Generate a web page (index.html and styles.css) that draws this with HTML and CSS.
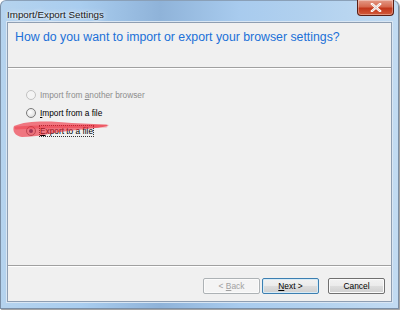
FILE: index.html
```html
<!DOCTYPE html>
<html>
<head>
<meta charset="utf-8">
<link rel="stylesheet" href="styles.css">
</head>
<body>
<div class="window">
  <div class="titlebar">
    <span class="title">Import/Export Settings</span>
    <div class="close">
      <svg width="12" height="9" viewBox="0 0 12 9"><path d="M2 1 L10 8 M10 1 L2 8" stroke="#fff" stroke-width="2.4" stroke-linecap="square"/><path d="M2 1 L10 8 M10 1 L2 8" stroke="#6b1d12" stroke-width="0.6" opacity="0.4"/></svg>
    </div>
  </div>
  <div class="client">
    <div class="header">How do you want to import or export your browser settings?</div>
    <div class="content">
      <label class="option disabled"><span class="radio"></span><span>Import from <u>a</u>nother browser</span></label>
      <label class="option"><span class="radio"></span><span><u>I</u>mport from a file</span></label>
      <label class="option"><span class="radio checked"></span><span class="focus"><u>E</u>xport to a file</span></label>
      <svg class="scribble" width="100" height="22" viewBox="0 0 100 22">
        <path d="M2 8 C 15 2, 40 3, 60 5 C 75 6, 90 6, 97 7 C 92 10, 72 11, 56 13 C 40 15, 25 19, 10 19 C 3 18, 0 13, 2 8 Z" fill="#ee2535" opacity="0.6"/>
        <path d="M4 10 C 30 8, 60 9, 94 8" stroke="#ee2535" stroke-width="3" stroke-linecap="round" fill="none" opacity="0.35"/>
      </svg>
    </div>
    <div class="footer">
      <button class="btn" disabled>&lt; <u>B</u>ack</button>
      <button class="btn default"><u>N</u>ext &gt;</button>
      <button class="btn cancel">Cancel</button>
    </div>
  </div>
</div>
</body>
</html>
```

FILE: styles.css
```css
* { box-sizing: border-box; }
html, body { margin: 0; padding: 0; }
body {
  width: 400px;
  height: 310px;
  overflow: hidden;
  background: #ffffff;
  font-family: "Liberation Sans", Arial, sans-serif;
}
.window {
  width: 399px;
  height: 309px;
  display: flex;
  flex-direction: column;
  padding: 0 6px 6px 6px;
  border-radius: 6px 6px 0 0;
  background: linear-gradient(90deg, #b5d3ee 0%, #a9cdef 20%, #8fb3d9 40%, #a8cbee 60%, #b3d2ef 80%, #c2dbf2 100%);
  border: 1px solid #7b8fa6;
  border-top-color: #8aa0b8;
  box-shadow: 1px 1px 1px rgba(0,0,0,0.4);
}
.titlebar {
  height: 21px;
  display: flex;
  align-items: flex-start;
  justify-content: space-between;
  position: relative;
}
.title {
  font-size: 9.8px;
  color: #1a1a1a;
  margin-top: 8px;
  text-shadow: 0 0 6px #ffffff, 0 0 3px #ffffff;
}
.close {
  width: 37px;
  height: 16px;
  margin-top: -1px;
  margin-right: -2px;
  border: 1px solid #5a1e14;
  border-top: none;
  border-radius: 0 0 4px 4px;
  background: linear-gradient(180deg, #e49a87 0%, #d6694f 45%, #c2371c 55%, #d25b3b 100%);
  display: flex;
  align-items: center;
  justify-content: center;
  box-shadow: inset 0 0 0 1px rgba(255,255,255,0.35);
}
.client {
  flex: 1;
  display: flex;
  flex-direction: column;
  background: #f0f0f0;
  border: 1px solid #8e9eb2;
  box-shadow: 0 0 0 1px #d9e6f3;
}
.header {
  height: 45px;
  padding: 7px 0 0 7px;
  font-size: 12.3px;
  white-space: nowrap;
  color: #2070d8;
  border-bottom: 1px solid #a0a0a0;
  box-shadow: 0 1px 0 #ffffff;
}
.content {
  flex: 1;
  position: relative;
  padding: 20px 0 0 18px;
  display: flex;
  flex-direction: column;
  gap: 5px;
  border-bottom: 1px solid #a0a0a0;
  box-shadow: 0 1px 0 #ffffff;
}
.option {
  display: flex;
  align-items: center;
  font-size: 8.3px;
  color: #000000;
  height: 13px;
}
.option.disabled { color: #8d8d8d; }
.radio {
  width: 10px;
  height: 10px;
  border-radius: 50%;
  border: 1px solid #7a7a7a;
  background: radial-gradient(circle at 40% 40%, #ffffff 0%, #e6e6e6 60%, #cfcfcf 100%);
  margin-right: 4px;
  position: relative;
}
.option.disabled .radio { border-color: #c2c2c2; background: #f4f4f4; }
.radio.checked::after {
  content: "";
  position: absolute;
  left: 2px; top: 2px;
  width: 4px; height: 4px;
  border-radius: 50%;
  background: #2d4a86;
}
.focus { outline: 1px dotted #333; outline-offset: 0; }
.scribble {
  position: absolute;
  left: 4px;
  top: 50px;
}
.footer {
  height: 35px;
  display: flex;
  align-items: center;
  justify-content: flex-end;
  padding: 5px 6px 0 0;
}
.btn {
  width: 57px;
  height: 16px;
  margin-left: 2px;
  font-family: "Liberation Sans", Arial, sans-serif;
  font-size: 8.4px;
  color: #000;
  padding: 0;
  border: 1px solid #707070;
  border-radius: 2px;
  background: linear-gradient(180deg, #f2f2f2 0%, #ebebeb 48%, #dddddd 52%, #cfcfcf 100%);
  box-shadow: inset 0 0 0 1px #fbfbfb;
}
.btn[disabled] {
  color: #a0a0a0;
  border-color: #adb2b5;
  background: #f4f4f4;
}
.btn.default {
  border-color: #3c7fb1;
  box-shadow: inset 0 0 0 1px #d7ebf6;
}
.btn.cancel { margin-left: 9px; }
```
